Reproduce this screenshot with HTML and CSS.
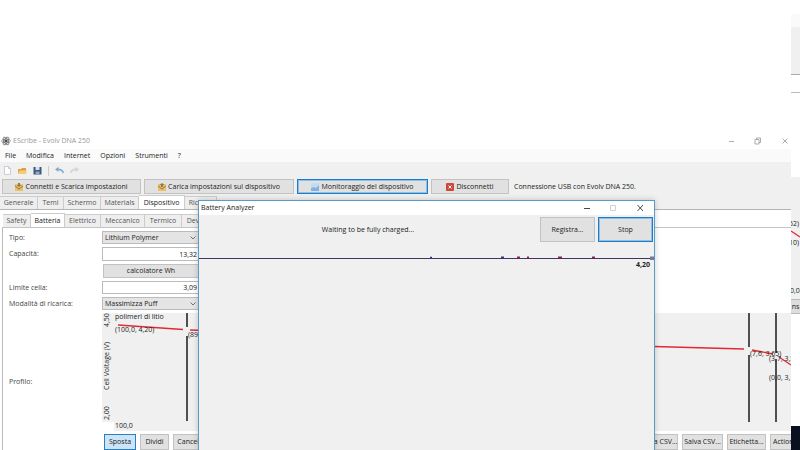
FILE: index.html
```html
<!DOCTYPE html>
<html lang="it">
<head>
<meta charset="utf-8">
<title>EScribe - Evolv DNA 250</title>
<link rel="stylesheet" href="styles.css">
</head>
<body>
<div class="desktop">
  <aside class="back-window">
    <div class="back-title"></div>
    <div class="back-toolbar"></div>
    <div class="back-tabs"></div>
    <div class="back-gap"></div>
    <div class="back-chart">
      <svg viewBox="0 0 9 122" width="9" height="122">
        <text x="-2" y="49">52)</text>
        <text x="-2" y="68">10)</text>
        <path d="M0 54L9 60" class="curve"/>
        <text x="-1" y="116">0,0</text>
      </svg>
    </div>
    <button class="back-button">ns</button>
    <div class="taskbar"></div>
  </aside>

  <main class="window">
    <header class="titlebar">
      <svg class="atom" viewBox="0 0 10 10" width="10" height="10"><g fill="none" stroke="#666" stroke-width=".7"><ellipse cx="5" cy="5" rx="4.4" ry="2"/><ellipse cx="5" cy="5" rx="4.4" ry="2" transform="rotate(60 5 5)"/><ellipse cx="5" cy="5" rx="4.4" ry="2" transform="rotate(120 5 5)"/></g><circle cx="5" cy="5" r="1.2" fill="#444"/></svg>
      <h1>EScribe - Evolv DNA 250</h1>
      <svg class="controls" viewBox="0 0 61 8" width="61" height="8" fill="none" stroke="#999" stroke-width=".8"><path d="M1 4.5H6M27 2.5H31V7H27ZM28.5 2.5V1H32.5V5.5H31M54.500 1.500L59.500 6.500M59.500 1.500L54.500 6.500"/></svg>
    </header>
    <nav class="menu">
      <a href="#">File</a><a href="#">Modifica</a><a href="#">Internet</a><a href="#">Opzioni</a><a href="#">Strumenti</a><a href="#">?</a>
    </nav>
    <div class="tools">
      <button aria-label="Nuovo"><svg viewBox="0 0 9 9" width="9" height="9"><path d="M1.500 .5H5.500L7.500 2.500V8.500H1.500Z" fill="#fff" stroke="#b4bcc8" stroke-width=".7"/><path d="M5.500 .5V2.500H7.500" fill="none" stroke="#b4bcc8" stroke-width=".7"/></svg></button>
      <button aria-label="Apri"><svg viewBox="0 0 9 9" width="9" height="9"><path d="M0 7.500V3H3L4 2H8V7.500Z" fill="#dda23c"/><path d="M0 7.500L1.500 4.500H9L8 7.500Z" fill="#f5cd74"/></svg></button>
      <button aria-label="Salva"><svg viewBox="0 0 9 9" width="9" height="9"><path d="M.5 1H8.500V8.500H.5Z" fill="#3f5878"/><path d="M2.500 1H6.500V4H2.500Z" fill="#d5e0ed"/><path d="M2.500 5.500H6.500V8.500H2.500Z" fill="#8ea7c6"/></svg></button>
      <span class="separator"></span>
      <button aria-label="Annulla"><svg viewBox="0 0 9 9" width="9" height="9" fill="none"><path d="M2 3.500C5 3 7.500 4.500 8.500 7" stroke="#7eadd4" stroke-width="1.600"/><path d="M0 3.500L3.500 .8V6Z" fill="#7eadd4"/></svg></button>
      <button aria-label="Ripeti"><svg viewBox="0 0 9 9" width="9" height="9" fill="none"><path d="M7 3.500C4 3 1.500 4.500 .5 7" stroke="#d0d4d8" stroke-width="1.500"/><path d="M9 3.500L5.500 .8V6Z" fill="#d0d4d8"/></svg></button>
    </div>
    <div class="actions">
      <button class="btn wide"><svg viewBox="0 0 9 8" width="9" height="8"><path d="M0 1H8V8H0Z" fill="#ecc069"/><path d="M0 3L4 6L8 3" fill="none" stroke="#8d6b33" stroke-width=".9"/><path d="M3 0H5V2H6.500L4 4L1.500 2H3Z" fill="#8a7a58"/></svg>Connetti e Scarica impostazioni</button>
      <button class="btn upload"><svg viewBox="0 0 9 8" width="9" height="8"><path d="M0 1H8V8H0Z" fill="#ecc069"/><path d="M0 3L4 6L8 3" fill="none" stroke="#8d6b33" stroke-width=".9"/><path d="M3 4H5V2H6.500L4 0L1.500 2H3Z" fill="#8a7a58"/></svg>Carica impostazioni sul dispositivo</button>
      <button class="btn monitor focused"><svg viewBox="0 0 9 8" width="9" height="8"><path d="M0 0H8V8H0Z" fill="#c4dcf2"/><path d="M0 8V5L3 4L5 5L8 2V8Z" fill="#7fb2e0"/></svg>Monitoraggio del dispositivo</button>
      <button class="btn disconnect"><svg viewBox="0 0 9 8" width="9" height="8"><rect width="8" height="8" rx="1" fill="#cf4638"/><path d="M2.500 2.500L5.500 5.500M5.500 2.500L2.500 5.500" stroke="#fff"/></svg>Disconnetti</button>
      <span class="status">Connessione USB con Evolv DNA 250.</span>
    </div>
    <div class="tabs main-tabs">
      <button class="t38">Generale</button><button class="t26">Temi</button><button class="t37">Schermo</button><button class="t38">Materials</button><button class="t46 active">Dispositivo</button><button class="t32">Ricerca</button>
    </div>
    <div class="page">
      <div class="tabs sub-tabs">
        <button class="t28">Safety</button><button class="t34 active">Batteria</button><button class="t36">Elettrico</button><button class="t44">Meccanico</button><button class="t37">Termico</button><button class="t32">Device</button>
      </div>
      <form class="panel">
        <label for="type">Tipo:</label>
        <div class="pick"><select id="type"><option>Lithium Polymer</option></select><svg viewBox="0 0 6 4" width="6" height="4"><path d="M.5 .5L3 3L5.500 .5" fill="none" stroke="#555" stroke-width=".8"/></svg></div>
        <label for="capacity">Capacità:</label>
        <input id="capacity" value="13,32">
        <button type="button" class="btn calc">calcolatore Wh</button>
        <label for="limit">Limite cella:</label>
        <input id="limit" value="3,09">
        <label for="mode">Modalità di ricarica:</label>
        <div class="pick"><select id="mode"><option>Massimizza Puff</option></select><svg viewBox="0 0 6 4" width="6" height="4"><path d="M.5 .5L3 3L5.500 .5" fill="none" stroke="#555" stroke-width=".8"/></svg></div>
        <span class="profile">Profilo:</span>
        <svg class="chart" viewBox="0 0 689 118">
          <path d="M0 0H689V118H12V109H0Z" fill="#f0f0f0"/>
          <path d="M85 0V14M85 23V108M647 0V34M647 42V109M674 0V40M674 46V109" class="marker"/>
          <path d="M16 12L81 16.500M88 17L552 33.500L642 36M650 37L671 41M677 44L689 52" class="curve"/>
          <text x="13" y="6">polimeri di litio</text>
          <text x="13" y="19">(100,0, 4,20)</text>
          <text x="86" y="24">(89,0, 4,10)</text>
          <text x="648" y="43">(7,6, 3,65)</text>
          <text x="667" y="48">(3,7, 3,50)</text>
          <text x="667" y="67">(0,0, 3,10)</text>
          <text transform="translate(7 14) rotate(-90)">4,50</text>
          <text transform="translate(7 77) rotate(-90)">Cell Voltage (V)</text>
          <text transform="translate(7 107) rotate(-90)">2,00</text>
          <text x="13" y="115">100,0</text>
        </svg>
        <div class="chart-buttons">
          <button type="button" class="btn selected w32">Sposta</button><button type="button" class="btn w29">Dividi</button><button type="button" class="btn w36">Cancella</button>
          <span class="spring"></span>
          <button type="button" class="btn w41">Carica CSV...</button><button type="button" class="btn w41">Salva CSV...</button><button type="button" class="btn w39">Etichetta...</button><button type="button" class="btn last">Actions</button>
        </div>
      </form>
    </div>
  </main>

  <section class="dialog">
    <header><h2>Battery Analyzer</h2>
      <svg viewBox="0 0 61 8" width="61" height="8" fill="none" stroke="#333" stroke-width=".9"><path d="M1 4.500H7M54.500 1L60 7M60 1L54.500 7"/><path d="M27.500 1.500H32.500V6.500H27.500Z" stroke="#ccc"/></svg>
    </header>
    <div class="dialog-bar">
      <p>Waiting to be fully charged...</p>
      <button class="btn">Registra...</button>
      <button class="btn focused">Stop</button>
    </div>
    <svg class="trace" viewBox="0 0 455 6">
      <path d="M0 4.500H454" stroke="#43345f" stroke-width="1.200"/>
      <path d="M231 3.500H233M302 3.300H305" stroke="#3a3593" stroke-width="1.500"/><path d="M318 3.300H321M328 3.300H330M359 3.300H363M393 3.300H396" stroke="#95204e" stroke-width="1.500"/>
      <rect x="451" y="2.500" width="4" height="3.500" fill="#77779c"/>
    </svg>
    <div class="reading">4,20</div>
  </section>
</div>
</body>
</html>
```
FILE: styles.css
```css
* { box-sizing: border-box; }
body, h1, h2, p { margin: 0; }
body, button, input, select, svg text {
  font: 7px/10px "Open Sans", "Noto Sans", sans-serif;
  color: #222;
}
body { background: #fff; }
svg { display: block; flex: none; }
svg text { fill: #222; }
button { padding: 0; white-space: nowrap; }
.desktop { position: relative; height: 100vh; overflow: hidden; }

.curve { fill: none; stroke: #e02a33; stroke-width: 1.3; }
.marker { fill: none; stroke: #505050; stroke-width: 2; }

.back-window {
  position: absolute; inset: 14px 0 0 auto; width: 9px;
  display: flex; flex-direction: column; overflow: hidden;
}
.back-title { height: 13px; background: #fafafa; }
.back-toolbar { height: 48px; background: #f0f0f0; border-bottom: 1px solid #aaa; }
.back-tabs { height: 18px; border-bottom: 1px solid #bbb; }
.back-gap { height: 84px; }
.back-chart { height: 122px; background: #f0f0f0; }
.back-button { height: 15px; border: 1px solid #bbb; border-width: 1px 0; background: #ddd; }
.taskbar { height: 24px; margin-top: auto; background: #0b1020; }

.window {
  position: absolute; inset: 133px 9px 0 0;
  display: flex; flex-direction: column; overflow: hidden; background: #f0f0f0;
}
.window > * { flex: none; }
.titlebar { display: flex; align-items: center; height: 16px; padding: 0 2px 0 1px; gap: 2px; background: #fff; }
.titlebar h1 { flex: 1; font-size: 7px; font-weight: 400; color: #999; }
.menu { display: flex; gap: 10px; height: 13px; padding: 2px 5px 0; background: #fafafa; }
.menu a { color: #222; text-decoration: none; }
.tools { display: flex; align-items: center; gap: 6px; height: 17px; padding: 0 3px; }
.tools button { border: 0; background: none; }
.separator { width: 1px; height: 10px; background: #ccc; }

.btn {
  display: flex; align-items: center; justify-content: center; gap: 1px;
  border: 1px solid #c2c2c2; background: #e1e1e1; overflow: hidden;
}
.focused { border: 1px solid #1c7cc9; box-shadow: inset 0 0 0 1px #8cc0e8; }
.selected { border-color: #2680c8; background: #cce4f7; }
.actions { display: flex; gap: 3px; height: 15px; padding-left: 2px; }
.wide { width: 139px; }
.upload { width: 150px; }
.monitor { width: 131px; }
.disconnect { width: 78px; }
.status { padding: 3px 2px; }

.tabs { display: flex; align-items: flex-end; }
.tabs button { height: 13px; border: 1px solid #ccc; border-width: 1px 1px 0 0; background: #eee; color: #555; overflow: hidden; }
.tabs .active { height: 14px; background: #fff; color: #222; }
.main-tabs { height: 15px; }
.sub-tabs { height: 17px; padding-left: 1px; }
.t26 { width: 26px; } .t28 { width: 28px; } .t32 { width: 32px; } .t34 { width: 34px; } .t36 { width: 36px; }
.t37 { width: 37px; } .t38 { width: 38px; } .t44 { width: 44px; } .t46 { width: 46px; }

.page { padding-left: 2px; background: #fff; border-top: 1px solid #b4b4b4; }
.panel {
  display: grid; grid-template-columns: 93px 97px 1fr; grid-template-rows: 13px 14px 14px 13px 13px auto 16px;
  row-gap: 3px; padding: 3px 0 0 6px; border-top: 1px solid #c4c4c4; border-left: 1px solid #bbb;
}
.panel label, .profile { grid-column: 1; align-self: center; color: #444; }
.profile { grid-row: 6 / 8; }
.panel input, .panel select { display: block; width: 100%; height: 100%; border: 1px solid #bbb; border-radius: 0; padding: 0 1px 0 2px; appearance: none; }
.panel input { grid-column: 2; text-align: right; background: #fff; }
.panel select { background: #e4e4e4; }
.pick { position: relative; grid-column: 2; }
.pick svg { position: absolute; right: 3px; top: 5px; }
.calc { grid-column: 2; margin-left: 1px; }
.chart { grid-column: 2 / 4; grid-row: 6; width: 100%; height: auto; }
.chart-buttons { grid-column: 2 / 4; grid-row: 7; display: flex; gap: 4px; padding-left: 2px; overflow: hidden; }
.spring { flex: 1; }
.w29 { width: 29px; flex: none; } .w32 { width: 32px; flex: none; } .w36 { width: 36px; flex: none; }
.w39 { width: 39px; flex: none; } .w41 { width: 41px; flex: none; }
.last { width: 21px; flex: none; justify-content: flex-start; border-right: 0; padding-left: 2px; }

.dialog {
  position: absolute; inset: 200px 145px 0 198px;
  border: 1px solid #589bc5; border-bottom: 0; background: #f0f0f0; box-shadow: 0 0 6px #0003;
}
.dialog header { display: flex; align-items: center; justify-content: space-between; height: 14px; padding: 0 10px 0 2px; background: #fff; }
.dialog h2 { font-size: 7px; font-weight: 400; }
.dialog-bar { display: flex; gap: 3px; padding: 2px 1px 0 0; }
.dialog-bar p { flex: 1; padding: 8px 0 0; text-align: center; }
.dialog-bar .btn { width: 55px; height: 25px; }
.trace { width: 100%; margin-top: 12px; }
.reading { padding-right: 4px; text-align: right; font-weight: 700; }
```
